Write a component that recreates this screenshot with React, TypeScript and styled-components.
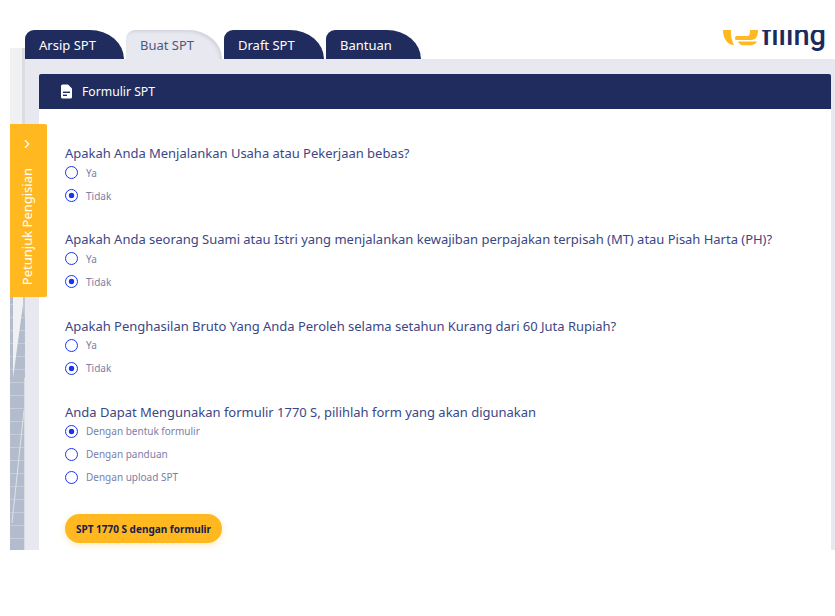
import React from 'react';
import styled, {createGlobalStyle} from 'styled-components';
import {ChevronRight} from 'lucide-react';

const GlobalStyle = createGlobalStyle`
  html, body {
    margin: 0;
    padding: 0;
    background: #fff;
    font-family: "Noto Sans", "Open Sans", sans-serif;
  }
`;

const Page = styled.div`
  position: relative;
  width: 835px;
  height: 616px;
  overflow: hidden;
  box-sizing: border-box;
  padding: 28px 0 0 10px;
`;

const TopBar = styled.header`
  display: flex;
  justify-content: space-between;
  align-items: flex-end;
  height: 31px;
  padding: 0 9px 0 15px;
`;

const Tabs = styled.nav`
  display: flex;
  gap: 2px;
`;

const Tab = styled.div<{$active?: boolean; $width: number}>`
  width: ${p => p.$width}px;
  height: 29px;
  box-sizing: border-box;
  padding-left: 14px;
  border-radius: 9px 34px 0 0 / 9px 29px 0 0;
  background: ${p => (p.$active ? '#e8e9f0' : '#202c5e')};
  color: ${p => (p.$active ? '#50577d' : '#fff')};
  box-shadow: ${p => (p.$active ? 'inset -2px 2px 3px #d4d5de' : 'none')};
  font-size: 13px;
  font-weight: 400;
  line-height: 31px;
`;

const Logo = styled.div`
  align-self: flex-start;
  display: flex;
  align-items: flex-start;
  gap: 3px;
  height: 23px;
  margin-top: 2px;
  overflow: hidden;
`;

const LogoText = styled.span`
  margin-top: -7px;
  color: #1c2a5e;
  font-family: Roboto, "Noto Sans", sans-serif;
  font-size: 29px;
  font-weight: 500;
  line-height: 24px;
`;

const Body = styled.div`
  display: flex;
  height: 491px;
`;

const Backdrop = styled.svg`
  flex: none;
  align-self: flex-start;
  display: block;
  width: 15px;
  height: 502px;
  margin-top: -11px;
`;

const Panel = styled.main`
  flex: 1;
  display: flex;
  flex-direction: column;
  box-sizing: border-box;
  padding: 15px 4px 0 14px;
  background: #e8e9f0;
`;

const PanelTitle = styled.div`
  flex: none;
  display: flex;
  align-items: center;
  gap: 9px;
  height: 35px;
  padding-left: 21px;
  border-radius: 2px 2px 0 0;
  background: #202c5e;
  color: #fff;
  font-size: 12.2px;
  font-weight: 400;
`;

const Form = styled.div`
  flex: 1;
  display: flex;
  flex-direction: column;
  padding: 37px 0 0 26px;
  background: #fff;
`;

const Question = styled.div`
  margin-bottom: 25.33px;
`;

const QuestionText = styled.div`
  color: #3b4785;
  font-size: 13px;
  font-weight: 400;
  line-height: 15px;
  letter-spacing: -0.02px;
`;

const Option = styled.label`
  display: flex;
  align-items: center;
  gap: 8px;
  height: 23px;
  color: #7a80a8;
  font-size: 10px;
`;

const Radio = styled.span<{$checked?: boolean}>`
  flex: none;
  width: 13px;
  height: 13px;
  box-sizing: border-box;
  border: 1.5px solid #1a35f0;
  border-radius: 50%;
  background: ${p => (p.$checked ? 'radial-gradient(circle, #1a35f0 0 2.5px, #fff 3.1px)' : '#fff')};
`;

const SubmitButton = styled.button`
  align-self: flex-start;
  width: 157px;
  height: 29px;
  padding: 0;
  border: none;
  border-radius: 15px;
  background: #ffb81f;
  box-shadow: 0 2px 6px rgba(255, 184, 31, 0.3);
  color: #14204f;
  font-family: inherit;
  font-size: 10px;
  font-weight: 700;
`;

const Guide = styled.aside`
  position: absolute;
  left: 10px;
  top: 124px;
  width: 37px;
  height: 173px;
  display: flex;
  flex-direction: column;
  align-items: center;
  padding: 13px 4px 0 0;
  box-sizing: border-box;
  border-radius: 0 2px 2px 0;
  background: #ffb81f;
  color: #fff;
`;

const GuideText = styled.span`
  margin-top: 17px;
  writing-mode: vertical-rl;
  transform: rotate(180deg);
  font-size: 13px;
  font-weight: 400;
  white-space: nowrap;
`;

const questions = [
  {text: 'Apakah Anda Menjalankan Usaha atau Pekerjaan bebas?', options: ['Ya', 'Tidak'], checked: 1},
  {text: 'Apakah Anda seorang Suami atau Istri yang menjalankan kewajiban perpajakan terpisah (MT) atau Pisah Harta (PH)?', options: ['Ya', 'Tidak'], checked: 1},
  {text: 'Apakah Penghasilan Bruto Yang Anda Peroleh selama setahun Kurang dari 60 Juta Rupiah?', options: ['Ya', 'Tidak'], checked: 1},
  {text: 'Anda Dapat Mengunakan formulir 1770 S, pilihlah form yang akan digunakan', options: ['Dengan bentuk formulir', 'Dengan panduan', 'Dengan upload SPT'], checked: 0},
];

function DocIcon() {
  return (
    <svg width="13" height="15" viewBox="0 0 13 15">
      <path d="M2.5 0.5H8L12 4.5V13A1.5 1.5 0 0 1 10.5 14.5H2.5A1.5 1.5 0 0 1 1 13V2A1.5 1.5 0 0 1 2.5 0.5Z" fill="#fff" />
      <rect x="3" y="7.6" width="7" height="1.4" fill="#202c5e" />
      <rect x="3" y="10.6" width="4" height="1.4" fill="#202c5e" />
    </svg>
  );
}

function LogoMark() {
  return (
    <svg width="37" height="23" viewBox="0 2 37 23" fill="#ffb81f">
      <path d="M1 2H9C8.5 7 9.5 12 12 17C5 17 1 10 1 2Z" />
      <path d="M28 2H36C36 8 34 12 29 12H14.5C12.5 12 12.5 8 14.5 8H26C27.5 8 28 5 28 2Z" />
      <path d="M16 13.5H35C34 15.5 32 17 29 17.3H21C18.5 17.3 17 15.5 16 13.5Z" />
    </svg>
  );
}

// the building photo that shows through at the left of the panel
function BackdropPhoto() {
  return (
    <Backdrop viewBox="0 0 15 502">
      <defs>
        <pattern id="floors" width="15" height="13" patternUnits="userSpaceOnUse">
          <rect y="9" width="15" height="1" fill="#c6ccd8" />
        </pattern>
      </defs>
      <rect width="15" height="502" fill="#b3bccd" />
      <rect width="15" height="502" fill="url(#floors)" />
      <path d="M0 0H15V249H14L3 330V249H0Z" fill="#f1f1f4" />
      <path d="M12 0H15V76H12Z" fill="#dcdde1" />
      <path d="M13 249H15V270L13 262Z" fill="#c2c8d5" />
      <path d="M14 362L2 475" stroke="#dbe3ea" strokeWidth="1" />
      <path d="M14.5 330V502" stroke="#d9dbe0" strokeWidth="1" />
    </Backdrop>
  );
}

function App() {
  return (
    <Page>
      <GlobalStyle />
      <TopBar>
        <Tabs>
          <Tab $width={99}>Arsip SPT</Tab>
          <Tab $width={96} $active>Buat SPT</Tab>
          <Tab $width={100}>Draft SPT</Tab>
          <Tab $width={95}>Bantuan</Tab>
        </Tabs>
        <Logo>
          <LogoMark />
          <LogoText>filing</LogoText>
        </Logo>
      </TopBar>
      <Body>
        <BackdropPhoto />
        <Panel>
          <PanelTitle>
            <DocIcon />
            Formulir SPT
          </PanelTitle>
          <Form>
            {questions.map(q => (
              <Question key={q.text}>
                <QuestionText>{q.text}</QuestionText>
                {q.options.map((o, i) => (
                  <Option key={o}>
                    <Radio $checked={i === q.checked} />
                    {o}
                  </Option>
                ))}
              </Question>
            ))}
            <SubmitButton>SPT 1770 S dengan formulir</SubmitButton>
          </Form>
        </Panel>
      </Body>
      <Guide>
        <ChevronRight size={14} strokeWidth={2} />
        <GuideText>Petunjuk Pengisian</GuideText>
      </Guide>
    </Page>
  );
}

export default App;
